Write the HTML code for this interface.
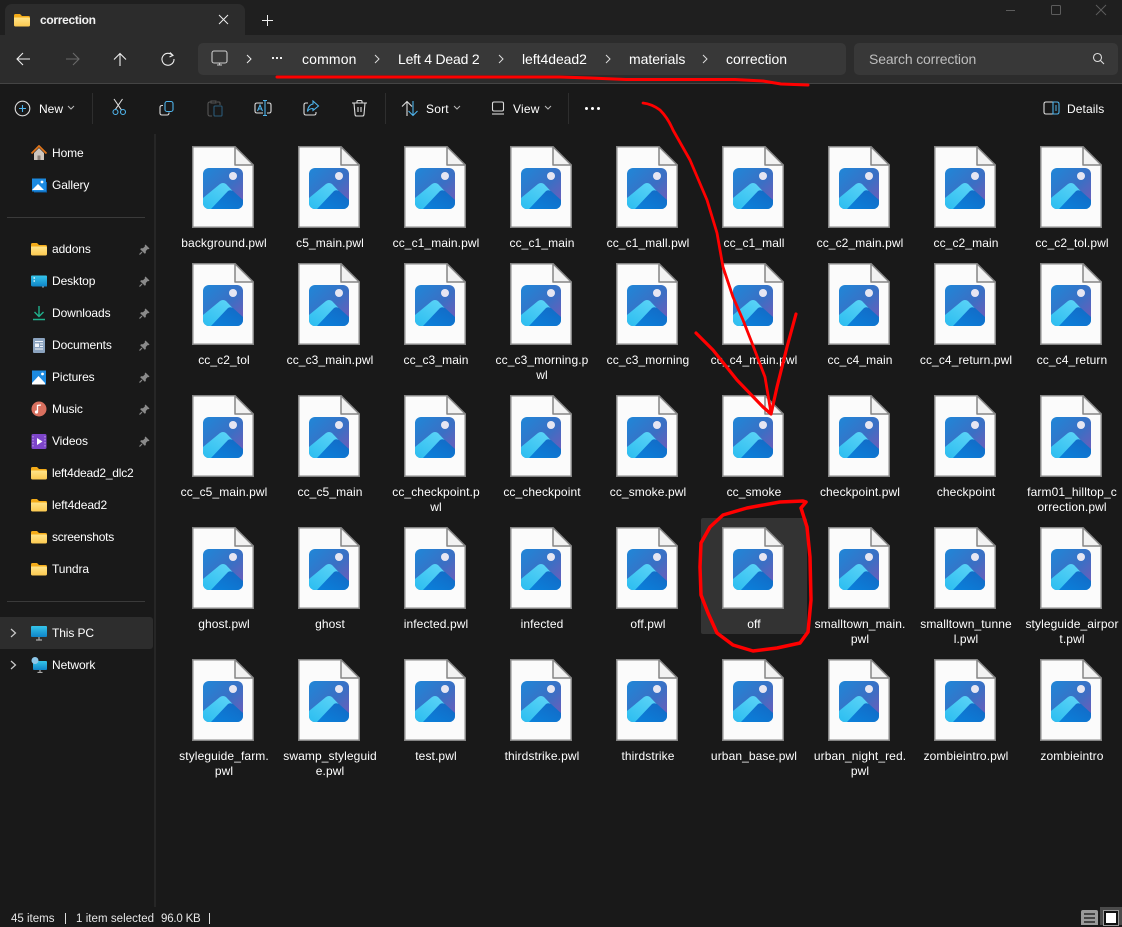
<!DOCTYPE html>
<html><head><meta charset="utf-8">
<style>
*{box-sizing:border-box}
html,body{margin:0;padding:0;background:#191919}
body{width:1122px;height:925px;position:relative;overflow:hidden;font-family:"Liberation Sans",sans-serif;color:#fff}
.a{position:absolute}
.t{position:absolute;white-space:nowrap;line-height:16px}
.c{position:absolute;width:106px;text-align:center;font-size:12px;line-height:15px;color:#fff;letter-spacing:.1px}
.d{position:absolute;width:62px;height:82px}
.n{font-size:12px;left:52px;color:#fff;letter-spacing:-.1px}
.b{font-size:14px;top:51px;color:#fff;letter-spacing:-.05px}
.f{position:absolute;left:31px;width:16px;height:16px}
.p{position:absolute;left:139px;width:11px;height:11px}
.s{position:absolute;width:1px;height:31px;top:93px;background:#2e2e2e}
</style></head><body>
<svg width="0" height="0" style="position:absolute">
<defs>
<linearGradient id="g1" x1="0" y1="0" x2="1" y2="1"><stop offset="0" stop-color="#1f87d8"/><stop offset=".55" stop-color="#3b6fc4"/><stop offset="1" stop-color="#7a58b8"/></linearGradient>
<linearGradient id="g2" x1="0" y1="1" x2="1" y2="0"><stop offset="0" stop-color="#2bbdf0"/><stop offset="1" stop-color="#66d8f8"/></linearGradient>
<linearGradient id="g3" x1="0" y1="1" x2="1" y2="0"><stop offset="0" stop-color="#0a82dc"/><stop offset="1" stop-color="#1468c4"/></linearGradient>
<linearGradient id="fo" x1="0" y1="0" x2="0" y2="1"><stop offset="0" stop-color="#ffe48a"/><stop offset="1" stop-color="#fcc94f"/></linearGradient>
<linearGradient id="mon" x1="0" y1="0" x2="0" y2="1"><stop offset="0" stop-color="#35c5ea"/><stop offset="1" stop-color="#0f84c8"/></linearGradient>
<clipPath id="rr"><rect x="11" y="22" width="40" height="41" rx="6"/></clipPath>
<symbol id="doc" viewBox="0 0 62 82">
<path d="M.75.75H43L61.25 19V81.25H.75Z" fill="#fbfbfb" stroke="#858585" stroke-width="1.500"/>
<path d="M43 .75V19H61.25Z" fill="#f2f2f2" stroke="#858585" stroke-width="1.500" stroke-linejoin="round"/>
<g clip-path="url(#rr)">
<rect x="11" y="22" width="40" height="41" fill="url(#g1)"/>
<path d="M11 52L28 38Q31 36 34 38L51 56V63H11Z" fill="url(#g2)"/>
<path d="M19 63L36 45Q38 43.500 41 45L51 54V63Z" fill="url(#g3)"/>
</g>
<circle cx="41" cy="30" r="4" fill="#e6e6f2"/>
</symbol>
<symbol id="fld" viewBox="0 0 16 16">
<path d="M0 3.500Q0 2 1.500 2H6L8 4H14.500Q16 4 16 5.500V7H0Z" fill="#f3ab19"/>
<path d="M0 5.500H14.500Q16 5.500 16 7V13Q16 14.500 14.500 14.500H1.500Q0 14.500 0 13Z" fill="url(#fo)"/>
</symbol>
<symbol id="pin" viewBox="0 0 11 11">
<path d="M6.500.5L10.500 4.500L9.500 5.300L8.800 5L6.800 7L6.800 9L5.800 9.800L1.200 5.200L2 4.200H4L6 2.200L5.700 1.500Z" fill="#8a8a8a"/>
<path d="M3 8L.5 10.500" stroke="#8a8a8a" stroke-width="1.200"/>
</symbol>
</defs>
</svg>

<!-- title bar -->
<div class="a" style="left:0;top:0;width:1122px;height:35px;background:#1f1f1f"></div>
<div class="a" style="left:5px;top:4px;width:240px;height:31px;background:#2c2c2c;border-radius:7px 7px 0 0"></div>
<svg class="a" style="left:14px;top:12px" width="16" height="16"><use href="#fld"/></svg>
<div class="t" style="left:40px;top:12px;font-size:12px;font-weight:bold;color:#f2f2f2;letter-spacing:-.3px">correction</div>
<svg class="a" style="left:218px;top:14px" width="11" height="11" fill="none" stroke="#eee" stroke-width="1"><path d="M1 1L10 10M10 1L1 10"/></svg>
<svg class="a" style="left:262px;top:15px" width="11" height="11" fill="none" stroke="#eee" stroke-width="1"><path d="M5.500 0V11M0 5.500H11"/></svg>
<svg class="a" style="left:1000px;top:4px" width="122" height="20" fill="none" stroke="#5c5c5c" stroke-width="1"><path d="M6 6.500H15"/><rect x="51.500" y="1.500" width="9" height="9" rx="1"/><path d="M96 1L106 11M106 1L96 11"/></svg>

<!-- nav bar -->
<div class="a" style="left:0;top:35px;width:1122px;height:48px;background:#2c2c2c"></div>
<div class="a" style="left:0;top:83px;width:1122px;height:1px;background:#444"></div>
<svg class="a" style="left:16px;top:51px" width="170" height="16" fill="none" stroke-width="1.100">
<path d="M1 8H14M7 2L1 8L7 14" stroke="#eee"/>
<path d="M50 8H63M57 2L63 8L57 14" stroke="#6a6a6a"/>
<path d="M104 3V15M98 8.500L104 2.500L110 8.500" stroke="#eee"/>
<path d="M156.500 4.300A6 6 0 1 0 158 8M154 1.500L157 4.300L153.500 6" stroke="#eee"/>
</svg>
<div class="a" style="left:198px;top:43px;width:648px;height:32px;background:#383838;border-radius:5px"></div>
<div class="a" style="left:854px;top:43px;width:264px;height:32px;background:#383838;border-radius:5px"></div>
<svg class="a" style="left:211px;top:50px" width="17" height="17" fill="none" stroke="#ccc" stroke-width="1.100"><rect x="1" y="1" width="15" height="12" rx="2"/><path d="M6 15H11M8.500 13V15"/></svg>
<svg class="a" style="left:245px;top:54px" width="8" height="10" fill="none" stroke="#eee"><path d="M2 1L6 5L2 9"/></svg>
<div class="a" style="left:272px;top:57px;width:2px;height:2px;background:#eee;box-shadow:4px 0 #eee,8px 0 #eee"></div>
<div class="t b" style="left:302px;letter-spacing:.15px">common</div>
<svg class="a" style="left:373px;top:54px" width="8" height="10" fill="none" stroke="#ddd"><path d="M2 1L6 5L2 9"/></svg>
<div class="t b" style="left:398px;letter-spacing:-.2px">Left 4 Dead 2</div>
<svg class="a" style="left:497px;top:54px" width="8" height="10" fill="none" stroke="#ddd"><path d="M2 1L6 5L2 9"/></svg>
<div class="t b" style="left:522px">left4dead2</div>
<svg class="a" style="left:604px;top:54px" width="8" height="10" fill="none" stroke="#ddd"><path d="M2 1L6 5L2 9"/></svg>
<div class="t b" style="left:629px">materials</div>
<svg class="a" style="left:701px;top:54px" width="8" height="10" fill="none" stroke="#ddd"><path d="M2 1L6 5L2 9"/></svg>
<div class="t b" style="left:726px">correction</div>
<div class="t" style="left:869px;top:51px;font-size:14px;color:#bdbdbd;letter-spacing:-.15px">Search correction</div>
<svg class="a" style="left:1092px;top:52px" width="13" height="13" fill="none" stroke="#ddd" stroke-width="1.100"><circle cx="5.500" cy="5.500" r="4"/><path d="M8.500 8.500L12 12"/></svg>

<!-- command bar -->
<svg class="a" style="left:14px;top:100px" width="17" height="17" fill="none"><circle cx="8.500" cy="8.500" r="7.300" stroke="#ddd" stroke-width="1.100"/><path d="M8.500 5V12M5 8.500H12" stroke="#4fb4ec" stroke-width="1.100"/></svg>
<div class="t" style="left:39px;top:101px;font-size:12px">New</div>
<svg class="a" style="left:67px;top:105px" width="8" height="6" fill="none" stroke="#bbb"><path d="M1 1L4 4L7 1"/></svg>
<div class="s" style="left:92px"></div>
<svg class="a" style="left:110px;top:98px" width="20" height="19" fill="none" stroke-width="1.100"><path d="M4 1L11.500 12M12.500 1L5 12" stroke="#ddd"/><circle cx="5.500" cy="14" r="2.500" stroke="#4fb4ec"/><circle cx="13" cy="14" r="2.500" stroke="#4fb4ec"/></svg>
<svg class="a" style="left:159px;top:100px" width="18" height="18" fill="none" stroke-width="1.100"><path d="M4 5.500H3Q1 5.500 1 7.500V13Q1 15 3 15H8Q10 15 10 13V12.500" stroke="#ddd"/><rect x="6" y="1.500" width="8" height="10" rx="2" stroke="#4fb4ec"/></svg>
<svg class="a" style="left:207px;top:99px" width="18" height="20" fill="none" stroke-width="1.100"><path d="M10 3H12Q13 3 13 4V6M5 17H3Q1 17 1 15V5Q1 3 3 3H4V2H9V4H4V3" stroke="#555"/><rect x="7" y="7" width="8" height="10" rx="1" stroke="#2a5a78"/></svg>
<svg class="a" style="left:253px;top:99px" width="20" height="20" fill="none" stroke-width="1.100"><path d="M10 4H4Q2 4 2 6V12Q2 14 4 14H10M14 4H16Q18 4 18 6V12Q18 14 16 14H14" stroke="#ddd"/><path d="M12 1.500V16.500M10 1.500H14M10 16.500H14M4.500 12L7 6L9.500 12M5.500 10H8.500" stroke="#4fb4ec"/></svg>
<svg class="a" style="left:303px;top:100px" width="18" height="18" fill="none" stroke-width="1.100"><path d="M5 3H3Q1 3 1 5V13Q1 15 3 15H11Q13 15 13 13V12" stroke="#ddd"/><path d="M10 1L15.500 6L10 10.500V8.500Q6 8.500 4.500 11.500Q5 5 10 4Z" stroke="#4fb4ec"/></svg>
<svg class="a" style="left:351px;top:99px" width="18" height="19" fill="none" stroke="#ddd" stroke-width="1.100"><path d="M1 4H16M6 4V2.500Q6 1.500 7 1.500H10Q11 1.500 11 2.500V4M3 4L4 15.500Q4.200 17 5.500 17H11.500Q12.800 17 13 15.500L14 4M7 8V13M10 8V13"/></svg>
<div class="s" style="left:385px"></div>
<svg class="a" style="left:401px;top:100px" width="18" height="17" fill="none" stroke-width="1.100"><path d="M6 16V1.500M1 6.500L6 1.500L11 6.500" stroke="#ddd"/><path d="M12 1V15.500M7.500 11L12 15.500L16.500 11" stroke="#4fb4ec"/></svg>
<div class="t" style="left:426px;top:101px;font-size:12px;letter-spacing:.2px">Sort</div>
<svg class="a" style="left:453px;top:105px" width="8" height="6" fill="none" stroke="#bbb"><path d="M1 1L4 4L7 1"/></svg>
<svg class="a" style="left:491px;top:101px" width="14" height="14" fill="none" stroke="#ddd" stroke-width="1.100"><rect x="1.500" y="1" width="11" height="9" rx="1.500"/><path d="M1 13H13"/></svg>
<div class="t" style="left:513px;top:101px;font-size:12px;letter-spacing:.2px">View</div>
<svg class="a" style="left:544px;top:105px" width="8" height="6" fill="none" stroke="#bbb"><path d="M1 1L4 4L7 1"/></svg>
<div class="s" style="left:568px"></div>
<div class="a" style="left:585px;top:107px;width:3px;height:3px;border-radius:50%;background:#fff;box-shadow:6px 0 #fff,12px 0 #fff"></div>
<svg class="a" style="left:1043px;top:101px" width="17" height="14" fill="none" stroke-width="1.100"><path d="M10 1H3Q1 1 1 3V11Q1 13 3 13H10" stroke="#ddd"/><path d="M10 1H14Q16 1 16 3V11Q16 13 14 13H10ZM12 5H14M12 7H14M12 9H14" stroke="#4fb4ec"/></svg>
<div class="t" style="left:1067px;top:101px;font-size:12px;letter-spacing:.1px">Details</div>

<!-- sidebar -->
<div class="a" style="left:154px;top:134px;width:2px;height:773px;background:#262626"></div>
<div class="a" style="left:7px;top:217px;width:138px;height:1px;background:#3a3a3a"></div>
<div class="a" style="left:7px;top:601px;width:138px;height:1px;background:#3a3a3a"></div>
<div class="a" style="left:0;top:617px;width:153px;height:32px;background:#2d2d2d;border-radius:0 3px 3px 0"></div>

<svg class="f" style="top:145px"><path d="M3 8V15H13V8L8 3Z" fill="#cfc6bd"/><path d="M6.500 15V10.500H9.500V15Z" fill="#8a7f78"/><path d="M.5 8.500L8 1L15.500 8.500" fill="none" stroke="#e0761c" stroke-width="1.800"/></svg>
<div class="t n" style="top:145px">Home</div>
<svg class="f" style="top:177px"><rect x="1" y="2" width="14" height="12" rx="1" fill="#fff"/><path d="M1 1.500H15V14.500H1Z" fill="#1c8ae0"/><path d="M1 13L7 7L13 13Z" fill="#fff"/><circle cx="11" cy="5" r="1.400" fill="#fff"/><path d="M3 15H15.500V5" fill="none" stroke="#0c5da8" stroke-width="1"/></svg>
<div class="t n" style="top:177px">Gallery</div>

<svg class="f" style="top:241px"><use href="#fld"/></svg>
<div class="t n" style="top:241px">addons</div>
<svg class="p" style="top:244px"><use href="#pin"/></svg>
<svg class="f" style="top:273px"><path d="M1 2.500H15Q16 2.500 16 3.500V13.500H2Q0 13.500 0 12V3.500Q0 2.500 1 2.500Z" fill="url(#mon)"/><path d="M2.500 5H4M2.500 8H4" stroke="#fff" stroke-width="1.300"/><path d="M11 14H13" stroke="#999"/></svg>
<div class="t n" style="top:273px">Desktop</div>
<svg class="p" style="top:276px"><use href="#pin"/></svg>
<svg class="f" style="top:305px" fill="none" stroke="#20b08c" stroke-width="1.400"><path d="M8 1V11M3.500 7L8 11.500L12.500 7M2 14.500H14"/></svg>
<div class="t n" style="top:305px">Downloads</div>
<svg class="p" style="top:308px"><use href="#pin"/></svg>
<svg class="f" style="top:337px"><rect x="2" y="1" width="12" height="15" rx="1" fill="#8ba3bf"/><path d="M4 4.500H12M9 7H12M9 9.500H12M4 12H12" stroke="#f0f4fa"/><rect x="4" y="6.500" width="4" height="3.500" fill="#f0f4fa"/></svg>
<div class="t n" style="top:337px">Documents</div>
<svg class="p" style="top:340px"><use href="#pin"/></svg>
<svg class="f" style="top:369px"><rect x="1" y="1.500" width="14" height="14" fill="#1c8ae0"/><path d="M1 14L7.500 7L14 14V15.500H1Z" fill="#fff"/><circle cx="11.500" cy="5" r="1.400" fill="#fff"/></svg>
<div class="t n" style="top:369px">Pictures</div>
<svg class="p" style="top:372px"><use href="#pin"/></svg>
<svg class="f" style="top:401px"><circle cx="8" cy="8" r="7.500" fill="#d9705f"/><path d="M6.500 11V4.500L10 4" fill="none" stroke="#fff" stroke-width="1.300"/><circle cx="5.500" cy="11" r="1.600" fill="#fff"/></svg>
<div class="t n" style="top:401px">Music</div>
<svg class="p" style="top:404px"><use href="#pin"/></svg>
<svg class="f" style="top:433px"><rect x="0.500" y="1" width="15" height="15" rx="1.500" fill="#7d45c9"/><path d="M6 5L11.500 8.500L6 12Z" fill="#fff"/><path d="M2 3V14M14 3V14" stroke="#c3a3ea" stroke-dasharray="1.500 1.500"/></svg>
<div class="t n" style="top:433px">Videos</div>
<svg class="p" style="top:436px"><use href="#pin"/></svg>
<svg class="f" style="top:465px"><use href="#fld"/></svg>
<div class="t n" style="top:465px;letter-spacing:-.22px">left4dead2_dlc2</div>
<svg class="f" style="top:497px"><use href="#fld"/></svg>
<div class="t n" style="top:497px">left4dead2</div>
<svg class="f" style="top:529px"><use href="#fld"/></svg>
<div class="t n" style="top:529px;letter-spacing:-.25px">screenshots</div>
<svg class="f" style="top:561px"><use href="#fld"/></svg>
<div class="t n" style="top:561px">Tundra</div>

<svg class="a" style="left:10px;top:628px" width="7" height="10" fill="none" stroke="#ccc" stroke-width="1.200"><path d="M1 1L5.500 5L1 9"/></svg>
<svg class="f" style="top:625px"><rect x="0" y="1" width="16" height="11" rx="1" fill="url(#mon)"/><path d="M8 12V14.500M5 15H11" stroke="#aaa" stroke-width="1.200"/></svg>
<div class="t n" style="top:625px">This PC</div>
<svg class="a" style="left:10px;top:660px" width="7" height="10" fill="none" stroke="#ccc" stroke-width="1.200"><path d="M1 1L5.500 5L1 9"/></svg>
<svg class="f" style="top:657px"><rect x="2" y="4" width="14" height="9" rx="1" fill="url(#mon)"/><path d="M9 13V15M6.500 15.500H11.500" stroke="#aaa" stroke-width="1.200"/><circle cx="4" cy="3.500" r="3.500" fill="#8cc6e8"/></svg>
<div class="t n" style="top:657px">Network</div>

<!-- selection -->
<div class="a" style="left:701px;top:518px;width:106px;height:116px;background:#333;border-radius:2px"></div>

<!-- row 1 -->
<svg class="d" style="left:192px;top:146px"><use href="#doc"/></svg><div class="c" style="left:171px;top:236px">background.pwl</div>
<svg class="d" style="left:298px;top:146px"><use href="#doc"/></svg><div class="c" style="left:277px;top:236px">c5_main.pwl</div>
<svg class="d" style="left:404px;top:146px"><use href="#doc"/></svg><div class="c" style="left:383px;top:236px">cc_c1_main.pwl</div>
<svg class="d" style="left:510px;top:146px"><use href="#doc"/></svg><div class="c" style="left:489px;top:236px">cc_c1_main</div>
<svg class="d" style="left:616px;top:146px"><use href="#doc"/></svg><div class="c" style="left:595px;top:236px">cc_c1_mall.pwl</div>
<svg class="d" style="left:722px;top:146px"><use href="#doc"/></svg><div class="c" style="left:701px;top:236px">cc_c1_mall</div>
<svg class="d" style="left:828px;top:146px"><use href="#doc"/></svg><div class="c" style="left:807px;top:236px">cc_c2_main.pwl</div>
<svg class="d" style="left:934px;top:146px"><use href="#doc"/></svg><div class="c" style="left:913px;top:236px">cc_c2_main</div>
<svg class="d" style="left:1040px;top:146px"><use href="#doc"/></svg><div class="c" style="left:1019px;top:236px">cc_c2_tol.pwl</div>
<!-- row 2 -->
<svg class="d" style="left:192px;top:263px"><use href="#doc"/></svg><div class="c" style="left:171px;top:353px">cc_c2_tol</div>
<svg class="d" style="left:298px;top:263px"><use href="#doc"/></svg><div class="c" style="left:277px;top:353px">cc_c3_main.pwl</div>
<svg class="d" style="left:404px;top:263px"><use href="#doc"/></svg><div class="c" style="left:383px;top:353px">cc_c3_main</div>
<svg class="d" style="left:510px;top:263px"><use href="#doc"/></svg><div class="c" style="left:489px;top:353px">cc_c3_morning.p<br>wl</div>
<svg class="d" style="left:616px;top:263px"><use href="#doc"/></svg><div class="c" style="left:595px;top:353px">cc_c3_morning</div>
<svg class="d" style="left:722px;top:263px"><use href="#doc"/></svg><div class="c" style="left:701px;top:353px">cc_c4_main.pwl</div>
<svg class="d" style="left:828px;top:263px"><use href="#doc"/></svg><div class="c" style="left:807px;top:353px">cc_c4_main</div>
<svg class="d" style="left:934px;top:263px"><use href="#doc"/></svg><div class="c" style="left:913px;top:353px">cc_c4_return.pwl</div>
<svg class="d" style="left:1040px;top:263px"><use href="#doc"/></svg><div class="c" style="left:1019px;top:353px">cc_c4_return</div>
<!-- row 3 -->
<svg class="d" style="left:192px;top:395px"><use href="#doc"/></svg><div class="c" style="left:171px;top:485px">cc_c5_main.pwl</div>
<svg class="d" style="left:298px;top:395px"><use href="#doc"/></svg><div class="c" style="left:277px;top:485px">cc_c5_main</div>
<svg class="d" style="left:404px;top:395px"><use href="#doc"/></svg><div class="c" style="left:383px;top:485px">cc_checkpoint.p<br>wl</div>
<svg class="d" style="left:510px;top:395px"><use href="#doc"/></svg><div class="c" style="left:489px;top:485px">cc_checkpoint</div>
<svg class="d" style="left:616px;top:395px"><use href="#doc"/></svg><div class="c" style="left:595px;top:485px">cc_smoke.pwl</div>
<svg class="d" style="left:722px;top:395px"><use href="#doc"/></svg><div class="c" style="left:701px;top:485px">cc_smoke</div>
<svg class="d" style="left:828px;top:395px"><use href="#doc"/></svg><div class="c" style="left:807px;top:485px">checkpoint.pwl</div>
<svg class="d" style="left:934px;top:395px"><use href="#doc"/></svg><div class="c" style="left:913px;top:485px">checkpoint</div>
<svg class="d" style="left:1040px;top:395px"><use href="#doc"/></svg><div class="c" style="left:1019px;top:485px">farm01_hilltop_c<br>orrection.pwl</div>
<!-- row 4 -->
<svg class="d" style="left:192px;top:527px"><use href="#doc"/></svg><div class="c" style="left:171px;top:617px">ghost.pwl</div>
<svg class="d" style="left:298px;top:527px"><use href="#doc"/></svg><div class="c" style="left:277px;top:617px">ghost</div>
<svg class="d" style="left:404px;top:527px"><use href="#doc"/></svg><div class="c" style="left:383px;top:617px">infected.pwl</div>
<svg class="d" style="left:510px;top:527px"><use href="#doc"/></svg><div class="c" style="left:489px;top:617px">infected</div>
<svg class="d" style="left:616px;top:527px"><use href="#doc"/></svg><div class="c" style="left:595px;top:617px">off.pwl</div>
<svg class="d" style="left:722px;top:527px"><use href="#doc"/></svg><div class="c" style="left:701px;top:617px">off</div>
<svg class="d" style="left:828px;top:527px"><use href="#doc"/></svg><div class="c" style="left:807px;top:617px">smalltown_main.<br>pwl</div>
<svg class="d" style="left:934px;top:527px"><use href="#doc"/></svg><div class="c" style="left:913px;top:617px">smalltown_tunne<br>l.pwl</div>
<svg class="d" style="left:1040px;top:527px"><use href="#doc"/></svg><div class="c" style="left:1019px;top:617px">styleguide_airpor<br>t.pwl</div>
<!-- row 5 -->
<svg class="d" style="left:192px;top:659px"><use href="#doc"/></svg><div class="c" style="left:171px;top:749px">styleguide_farm.<br>pwl</div>
<svg class="d" style="left:298px;top:659px"><use href="#doc"/></svg><div class="c" style="left:277px;top:749px">swamp_styleguid<br>e.pwl</div>
<svg class="d" style="left:404px;top:659px"><use href="#doc"/></svg><div class="c" style="left:383px;top:749px">test.pwl</div>
<svg class="d" style="left:510px;top:659px"><use href="#doc"/></svg><div class="c" style="left:489px;top:749px">thirdstrike.pwl</div>
<svg class="d" style="left:616px;top:659px"><use href="#doc"/></svg><div class="c" style="left:595px;top:749px">thirdstrike</div>
<svg class="d" style="left:722px;top:659px"><use href="#doc"/></svg><div class="c" style="left:701px;top:749px">urban_base.pwl</div>
<svg class="d" style="left:828px;top:659px"><use href="#doc"/></svg><div class="c" style="left:807px;top:749px">urban_night_red.<br>pwl</div>
<svg class="d" style="left:934px;top:659px"><use href="#doc"/></svg><div class="c" style="left:913px;top:749px">zombieintro.pwl</div>
<svg class="d" style="left:1040px;top:659px"><use href="#doc"/></svg><div class="c" style="left:1019px;top:749px">zombieintro</div>

<!-- status bar -->
<div class="t" style="left:11px;top:911px;font-size:11.500px;color:#e6e6e6">45 items</div>
<div class="a" style="left:65px;top:913px;width:1px;height:11px;background:#ddd"></div>
<div class="t" style="left:76px;top:911px;font-size:11.500px;color:#e6e6e6;letter-spacing:.05px">1 item selected</div>
<div class="t" style="left:161px;top:911px;font-size:11.500px;color:#e6e6e6;letter-spacing:-.2px">96.0 KB</div>
<div class="a" style="left:209px;top:913px;width:1px;height:11px;background:#ddd"></div>
<div class="a" style="left:1081px;top:910px;width:17px;height:15px;background:#9a9a9a;border-radius:2px 2px 0 0"></div>
<svg class="a" style="left:1081px;top:910px" width="17" height="15" stroke="#111" stroke-width="1.200"><path d="M3 4H14M3 8H14M3 12H14"/></svg>
<div class="a" style="left:1100px;top:907px;width:22px;height:18px;background:#4a4a4a"></div>
<div class="a" style="left:1104px;top:911px;width:14px;height:14px;background:#fff;border:2px solid #111;outline:1px solid #999"></div>

<!-- red annotations -->
<svg class="a" style="left:0;top:0;pointer-events:none" width="1122" height="925" fill="none" stroke="#f00" stroke-linecap="round" stroke-linejoin="round">
<path stroke-width="3" d="M277 77H560L590 78L626 79.500H735L763 81L781 84L808 85"/>
<path stroke-width="2.800" d="M643 103Q652 104 660 110Q668 118 673 130L690 160L707 200L717 233L723 267L733 297L743 320L752 343L765 377L771 413"/>
<path stroke-width="3.200" d="M796 314L787 347L777 387L771 414L763 407L737 380L713 350L696 333"/>
<path stroke-width="3.500" d="M801 508L806 502L803 501L780 502L747 508L723 515L710 527L701 543L700 567L701 595L708 613L717 633L733 645L753 651L777 648L800 643L808 632L811 600L810 557L807 527L801 508"/>
</svg>
</body></html>
